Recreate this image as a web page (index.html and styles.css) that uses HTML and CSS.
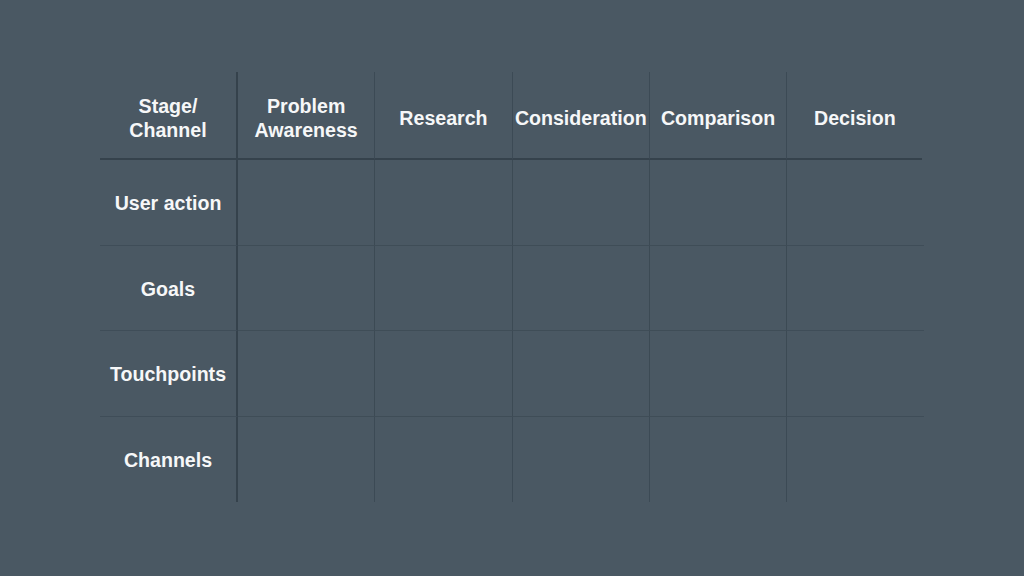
FILE: index.html
```html
<!DOCTYPE html>
<html>
<head>
<meta charset="utf-8">
<link rel="stylesheet" href="styles.css">
</head>
<body>
<div class="journey">
  <div class="cell head first">Stage/<br>Channel</div>
  <div class="cell head">Problem<br>Awareness</div>
  <div class="cell head">Research</div>
  <div class="cell head">Consideration</div>
  <div class="cell head">Comparison</div>
  <div class="cell head last">Decision</div>

  <div class="cell label first">User action</div>
  <div class="cell"></div><div class="cell"></div><div class="cell"></div><div class="cell"></div><div class="cell last"></div>

  <div class="cell label first">Goals</div>
  <div class="cell"></div><div class="cell"></div><div class="cell"></div><div class="cell"></div><div class="cell last"></div>

  <div class="cell label first">Touchpoints</div>
  <div class="cell"></div><div class="cell"></div><div class="cell"></div><div class="cell"></div><div class="cell last"></div>

  <div class="cell label first bottom">Channels</div>
  <div class="cell bottom"></div><div class="cell bottom"></div><div class="cell bottom"></div><div class="cell bottom"></div><div class="cell last bottom"></div>
</div>
</body>
</html>
```
FILE: styles.css
```css
html, body {
  margin: 0;
  padding: 0;
  background: #4a5863;
  width: 1024px;
  height: 576px;
  overflow: hidden;
}
body {
  font-family: "Liberation Sans", Arial, sans-serif;
  color: #f6f7f8;
}
.journey {
  margin: 72px 0 0 100px;
  width: 824px;
  display: grid;
  grid-template-columns: 138px repeat(5, 137.3px);
  grid-template-rows: 88px repeat(4, 85.5px);
}
.cell {
  box-sizing: border-box;
  display: flex;
  align-items: center;
  justify-content: center;
  text-align: center;
  font-weight: bold;
  font-size: 19.6px;
  line-height: 24px;
  border-right: 1px solid rgba(40, 52, 62, 0.38);
  border-bottom: 1px solid rgba(40, 52, 62, 0.3);
}
.cell.first {
  border-right: 2px solid #35424c;
}
.cell.last {
  border-right: none;
}
.cell.head {
  border-bottom: 2px solid #35424c;
  padding-top: 6px;
}
.cell.head.last {
  margin-right: 2px;
}
.cell.bottom {
  border-bottom: none;
}
.cell.label {
  padding-top: 2px;
}
```
